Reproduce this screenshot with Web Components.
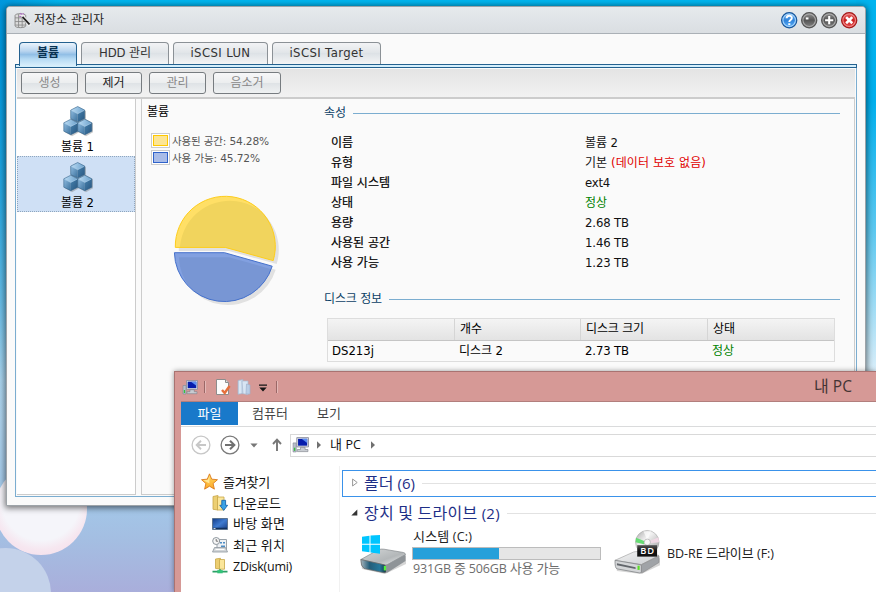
<!DOCTYPE html>
<html lang="ko">
<head>
<meta charset="utf-8">
<title>저장소 관리자</title>
<style>
html,body{margin:0;width:876px;height:592px;overflow:hidden}
</style>
</head>
<body>
<desk-top></desk-top>
<script>
const define = (name, css, html, after) => {
  const t = document.createElement('template');
  t.innerHTML = `<style>*{box-sizing:border-box}:host{display:block;box-sizing:border-box}${css}</style>${html}`;
  customElements.define(name, class extends HTMLElement {
    constructor() { super(); this.attachShadow({mode: 'open'}).append(t.content.cloneNode(true)); }
    connectedCallback() { if (after) after(this, this.shadowRoot); }
  });
};

/* A line of text; Hangul and Latin runs have separate sizes, w is the line's width. */
define('ui-text', `:host{display:inline-block;white-space:pre;line-height:16px;font-size:var(--ko,12px);flex:none}
  .l{font-size:var(--la,11px)}`, `<span id="t"></span>`, (el, r) => {
  const t = r.getElementById('t');
  t.textContent = '';
  const s = el.getAttribute('text');
  for (const run of s.match(/[가-힣]+|[^가-힣]+/g)) {
    const n = document.createElement('span');
    n.className = /[가-힣]/.test(run) ? 'k' : 'l';
    n.textContent = run;
    t.append(n);
  }
  const w = +el.getAttribute('w');
  if (w) {
    const d = (w - t.getBoundingClientRect().width) / s.length;
    t.style.letterSpacing = d.toFixed(3) + 'px';
    el.style.width = w + 'px';
  }
});

const cube = (x, y) => `<g transform="translate(${x} ${y})"><path d="M0 3.6 7 0 14 3.6 7 7.2z" fill="url(#top)"/><path d="M0 3.6 7 7.2V15.5L0 12z" fill="url(#lf)"/><path d="M14 3.6 7 7.2V15.5L14 12z" fill="url(#rt)"/><path d="M.3 3.8 7 7.2l6.7-3.4" stroke="#a9d0ee" stroke-width=".6" fill="none"/><path d="M0 3.6 7 0l7 3.6V12l-7 3.5L0 12z" fill="none" stroke="#336188" stroke-width=".6"/></g>`;
const pc = `<path d="M1 6.5h3V15H1z" fill="#b9bfca" stroke="#828895" stroke-width=".6"/><path d="M1.8 11h1.3v3H1.8z" fill="#35c23e"/><path d="M4.5 1.5h11v8.8h-11z" fill="#dcdfe6" stroke="#85899a" stroke-width=".8"/><path d="M5.7 2.7h8.6v6.4H5.7z" fill="#061cac"/><path d="M9 2.7h5.3v4z" fill="#5a8cf2"/><path d="M8 10.7h4.3v2H15v2H5v-2h3z" fill="#c8ccd2" stroke="#7c8089" stroke-width=".6"/>`;
const icons = {
  cubes: ['0 0 32 32', `<defs><linearGradient id="top" x2="1"><stop stop-color="#bcdcf4"/><stop offset="1" stop-color="#6ba1cc"/></linearGradient><linearGradient id="lf" x2="1" y2="1"><stop stop-color="#8fbbdf"/><stop offset="1" stop-color="#3a709c"/></linearGradient><linearGradient id="rt" x2="1" y2="1"><stop stop-color="#4680ad"/><stop offset="1" stop-color="#28567f"/></linearGradient></defs><g fill="#777" opacity=".4" transform="translate(1 1.2)"><path d="M9 4 16 .5 23 4v8L30 16v9l-7 4-7-4-7 4-7-4v-9l7-4z"/></g>${cube(8.7,.5)}${cube(1.8,13.2)}${cube(15.8,13.2)}`],
  store: ['0 0 16 16', `<path d="M1 3.3C1 1 11 1 11 3.3V13C11 15.3 1 15.3 1 13z" fill="#dcdcdc" stroke="#888" stroke-width=".9"/><path d="M1 5.5h10M1 9h10M1 12.3h10M4.3 2v12.5M7.7 2v12.5" stroke="#888" stroke-width=".8"/><path d="m7 2 8 11" stroke="#eee" stroke-width="3"/><path d="m8 4.5 6.6 7.2" stroke="#222" stroke-width="1.7"/><path d="m5.8 1 1.4 1.4M8.5 1v1.5M5 4.2h1.8" stroke="#ae68c4" stroke-width="1"/>`],
  help: ['0 0 16 16', `<circle cx="8" cy="8" r="7.4" fill="url(#b)" stroke="#1b5799" stroke-width="1.2"/><circle cx="8" cy="8" r="6.1" fill="none" stroke="#a7d4fb"/><path d="M5.5 6.2C5.5 2.8 10.6 2.8 10.6 5.9 10.6 8 8.1 7.7 8.1 9.7" fill="none" stroke="#fff" stroke-width="1.9"/><path d="M7.1 11h2v1.8h-2z" fill="#fff"/><defs><linearGradient id="b" y2="1" x2="0"><stop stop-color="#7ab8f2"/><stop offset=".5" stop-color="#2f83da"/><stop offset="1" stop-color="#5cb0fa"/></linearGradient></defs>`],
  min: ['0 0 16 16', `<circle cx="8" cy="8" r="7.4" fill="url(#g)" stroke="#555" stroke-width="1.2"/><circle cx="8" cy="8" r="6.1" fill="none" stroke="#aaa"/><path d="M4.7 5.3h2.6v2H4.7z" fill="#fff"/><defs><linearGradient id="g" y2="1" x2="0"><stop stop-color="#999"/><stop offset=".5" stop-color="#555"/><stop offset="1" stop-color="#888"/></linearGradient></defs>`],
  max: ['0 0 16 16', `<circle cx="8" cy="8" r="7.4" fill="url(#g)" stroke="#555" stroke-width="1.2"/><circle cx="8" cy="8" r="6.1" fill="none" stroke="#aaa"/><path d="M8 4v8M4 8h8" stroke="#fff" stroke-width="2"/><defs><linearGradient id="g" y2="1" x2="0"><stop stop-color="#999"/><stop offset=".5" stop-color="#505050"/><stop offset="1" stop-color="#888"/></linearGradient></defs>`],
  close: ['0 0 16 16', `<circle cx="8" cy="8" r="7.4" fill="url(#r)" stroke="#a31a1a" stroke-width="1.2"/><circle cx="8" cy="8" r="6.1" fill="none" stroke="#f08a8a"/><path d="m5 5 6 6M11 5l-6 6" stroke="#fff" stroke-width="2.5"/><defs><linearGradient id="r" y2="1" x2="0"><stop stop-color="#e86b6b"/><stop offset=".5" stop-color="#c82020"/><stop offset="1" stop-color="#e65050"/></linearGradient></defs>`],
  pc: ['0 0 16 16', pc],
  check: ['0 0 16 16', `<path d="M1.5.5h9l3 3v12h-12z" fill="#fcfcfc" stroke="#8d8d8d"/><path d="M10.5.5v3h3" fill="#ddd" stroke="#8d8d8d"/><path d="m7 11 2.7 3L14.6 7" stroke="#e5703c" stroke-width="2.5" fill="none"/>`],
  folder: ['0 0 16 16', `<path d="M2 1.5 7 .5v14l-5 .8z" fill="#c6d7ea" stroke="#a5b5cb" stroke-width=".7"/><path d="M6 2h6v13.5l-5-.8z" fill="#d8e5f4" stroke="#abbad0" stroke-width=".7"/><path d="M10.5 5 14 6v9h-4z" fill="#b9cde6" stroke="#a0b2cc" stroke-width=".7"/><path d="M4 1.8v12.5" stroke="#eef5fc"/>`],
  star: ['0 0 16 16', `<path d="m8 .8 2.1 5 5.4.5-4.1 3.6 1.2 5.3L8 12.4l-4.6 2.8 1.2-5.3L.5 6.3l5.4-.5z" fill="url(#s)" stroke="#d97516" stroke-linejoin="round" stroke-width=".8"/><path d="m8 2.8-.1 7-5.5-2.9 4-.4z" fill="#fff3b4" opacity=".75"/><defs><linearGradient id="s" y2="1" x2="0"><stop stop-color="#ffd95e"/><stop offset="1" stop-color="#fca92a"/></linearGradient></defs>`],
  down: ['0 0 16 16', `<path d="M1 1.5 6 .5V15l-5-.7z" fill="#eccf73" stroke="#c9a648" stroke-width=".8"/><path d="M5.5 2H12v13H5.5z" fill="#fbe69a" stroke="#c9a648" stroke-width=".8"/><path d="M9.8 5.3h3.8v5h2L11.7 15.4 7.8 10.3h2z" fill="#39a2e6" stroke="#1766ae" stroke-width=".9"/>`],
  desk: ['0 0 16 16', `<path d="M.5 2.5h15v11H.5z" fill="url(#d)" stroke="#5d748f"/><path d="M1 11.7h14V13H1z" fill="#11305c"/><path d="M1.5 12h2v.8h-2z" fill="#fff"/><defs><linearGradient id="d" x2="1" y2="1"><stop stop-color="#123a86"/><stop offset=".5" stop-color="#3f7bd0"/><stop offset="1" stop-color="#173c83"/></linearGradient></defs>`],
  recent: ['0 0 16 16', `<path d="M5 2.5h9.5v10H5z" fill="#eef1f4" stroke="#9aa2a9"/><path d="M8 5h2v1.5H8zM11 5h2v1.5h-2zM9 8.5h4V10H9z" fill="#4c8cc4"/><circle cx="4.2" cy="4" r="3.5" fill="#f6f6f6" stroke="#8e979e"/><path d="M4.2 2v2.2h2" stroke="#555" stroke-width=".8" fill="none"/><path d="M2.5 10.5h11l2 4.5h-15z" fill="#d1d5d8" stroke="#8e979e" stroke-width=".8"/><path d="M3.5 12.5h9" stroke="#fff"/>`],
  net: ['0 0 16 16', `<path d="m3.5 1 5-.7v10.9l-5-.8z" fill="#ecce70" stroke="#c8a748" stroke-width=".8"/><path d="M7.5 1.5h5v9.7h-5z" fill="#fbe69a" stroke="#c8a748" stroke-width=".8"/><path d="M8 11.2v2.3M.5 13.6h15" stroke="#2aa065" stroke-width="1.7"/><path d="M5.3 12.1h5.4v3.2H5.3z" fill="#32c278"/>`],
  hdd: ['0 0 46 40', `<path d="m1 29 21-12 24 4v8L25 39 2 34z" fill="#777" opacity=".3"/><path d="M.8 24.5 18 15q3-1.4 6-.8l19.5 3.3q2 .6 2 2L28 29.3q-2 .9-4 .5z" fill="url(#m)" stroke="#85898c" stroke-width=".7"/><path d="M.8 24.5 24 29.8q2 .4 2 2V37q-.3 1-2 .7L4 33.5Q.6 31 .8 24.5z" fill="url(#f)" stroke="#666" stroke-width=".7"/><path d="M26 30.2 45.5 19.5v6.5L27.5 37.5l-1.5.2z" fill="#8f9498"/><path d="M23.8 31h2.3v4.4h-2.3z" fill="#52f33d"/><path d="M2 1.7 9.5.7v8H2zM10.5.5 20 0v8.7h-9.5zM2 9.7h7.5v7.5L2 16.3zM10.5 9.7H20v9l-9.5-1.3z" fill="#00c5ff"/><defs><linearGradient id="m" x2="1" y2="1"><stop stop-color="#d4d7d8"/><stop offset=".6" stop-color="#b3b7b9"/><stop offset="1" stop-color="#f2f3f4"/></linearGradient><linearGradient id="f" x2="1"><stop stop-color="#a8b4bb"/><stop offset=".35" stop-color="#235d79"/><stop offset=".75" stop-color="#25789b"/><stop offset="1" stop-color="#183943"/></linearGradient></defs>`],
  bd: ['0 0 48 46', `<path d="m2 37 20-11 25 3v7L28 45 3 42z" fill="#777" opacity=".3"/><path d="m1 31 19-8.5q2-.6 4-.4L46 26 28 35.3z" fill="url(#m)" stroke="#999" stroke-width=".6"/><path d="m1 31 26 4.5q1 .4 1 1.5v6q-.3 1-2 .9L3 39.7Q.8 39 1 31z" fill="#d4d6d8" stroke="#75787b" stroke-width=".7"/><path d="m28 35.5 18-9v6.7L29 43.7h-1z" fill="#a0a3a7" stroke="#888" stroke-width=".6"/><path d="m3 34 19 4v1.8L3 36z" fill="#63676c"/><path d="M24 36.5h2.2v4.3H24z" fill="#5cdf26"/><circle cx="34" cy="12.5" r="12" fill="url(#c)" stroke="#a5a5a5" stroke-width=".6"/><path d="m22.5 8 9 3.5-1 3-8.5-2z" fill="#66dc73"/><path d="m35.5 11.5 10-4 .5 5-10 1z" fill="#f0d8e4"/><path d="m30 1.3 4 9 4-9z" fill="#fff" opacity=".7"/><circle cx="34" cy="12.5" r="3.2" fill="#f7f7f7" stroke="#aaa" stroke-width=".7"/><path d="M23.7 15.5H44v11.7H23.7z" fill="url(#k)"/><text x="33.9" y="24.4" text-anchor="middle" font-family="Open Sans" font-size="9.5" font-weight="600" textLength="14" fill="#fff">BD</text><defs><linearGradient id="m" x2="1" y2="1"><stop stop-color="#f3f3f3"/><stop offset="1" stop-color="#cbced1"/></linearGradient><linearGradient id="c" x2="1" y2="1"><stop stop-color="#a7a7a7"/><stop offset=".4" stop-color="#f2f2f2"/><stop offset="1" stop-color="#999"/></linearGradient><linearGradient id="k" y2="1" x2="0"><stop stop-color="#555"/><stop offset=".5" stop-color="#111"/></linearGradient></defs>`],
  back: ['0 0 20 20', `<circle cx="10" cy="10" r="8.9" fill="#fff" stroke="#c7c7c7" stroke-width="1.3"/><path d="M15 10H6M10 5.8 5.7 10l4.3 4.2" fill="none" stroke="#c7c7c7" stroke-width="1.9"/>`],
  fwd: ['0 0 20 20', `<circle cx="10" cy="10" r="8.9" fill="#fff" stroke="#7a7a7a" stroke-width="1.3"/><path d="M5 10h9M10 5.8l4.3 4.2-4.3 4.2" fill="none" stroke="#707070" stroke-width="2.1"/>`],
  up: ['0 0 10 14', `<path d="M5 13V2M1 6l4-4.3L9 6" fill="none" stroke="#777" stroke-width="1.9"/>`],
  dd: ['0 0 8 5', `<path d="M.4.4h7.2L4 4.4z" fill="#777"/>`],
  qat: ['0 0 8 8', `<path d="M0 .5h8v1.3H0z M.3 3.5h7.4L4 7.5z" fill="#151515"/>`],
  crumb: ['0 0 4 8', `<path d="M0 .3 4 4 0 7.7z" fill="#707070"/>`],
  closed: ['0 0 6 9', `<path d="M.6 1v7l4.6-3.5z" fill="#fff" stroke="#999"/>`],
  open: ['0 0 7 7', `<path d="M6.3.5v6H.3z" fill="#333"/>`]
};
define('ui-icon', `:host{flex:none}svg{display:block;width:100%;height:100%;overflow:visible}`, `<svg></svg>`, (el, r) => {
  const [vb, body] = icons[el.getAttribute('name')];
  const s = r.querySelector('svg');
  s.setAttribute('viewBox', vb); s.innerHTML = body;
  el.style.width = el.getAttribute('w') + 'px';
  el.style.height = (el.getAttribute('h') || el.getAttribute('w')) + 'px';
});

define('tab-item', `:host{display:flex;justify-content:center;height:22px;padding-top:2px;border:1px solid #8b9196;border-bottom:0;border-radius:4px 4px 0 0;background:linear-gradient(#f2f3f5,#e2e6e9 45%,#dde2e6 50%,#f4f5f6);color:#333}
  :host([on]){height:24px;margin-bottom:-2px;z-index:1;position:relative;border-color:#24618f;font-weight:bold;color:#0a3353;background:linear-gradient(#eaf3fc,#b9d5ef 35%,#92bfe6 50%,#b7dbf4 70%,#d9effb)}`, `<slot></slot>`);
define('tool-button', `:host{display:flex;justify-content:center;height:22px;padding-top:2px;border:1px solid #777c80;border-radius:3px;background:linear-gradient(#f7f7f8,#eceeef 48%,#dfe3e6 52%,#eff1f2);color:#222}:host([off]){color:#888}`, `<slot></slot>`);
define('volume-item', `:host{height:56px;display:flex;flex-direction:column;align-items:center;padding:5px 0 0 3px;border:1px solid transparent;color:#000}
  :host([on]){background:#cfe0f5;border:1px dotted #8fa6be}::slotted(ui-text){margin-top:1px}`, `<ui-icon name="cubes" w="32"></ui-icon><slot></slot>`);
define('legend-row', `:host{display:flex;align-items:center;height:17px;gap:2px;color:#555}
  i{width:19px;height:15px;border:1px solid #ccc;padding:1px;background:#fff}b{display:block;height:11px;border:1px solid #ffc800;background:#fce595}:host([blue]) b{border-color:#2f62ca;background:#a9bce8}`, `<i><b></b></i><slot></slot>`);
define('pie-chart', `svg{display:block}`, `<svg width="120" height="120" viewBox="165 188 120 120">
  <defs><path id="y" d="M225.3 246.4H175.3A50 50 0 1 1 273.2 259.6z"/><path id="u" d="M224.5 251.7H174.4A50 50 0 0 0 272.2 265.2z"/><clipPath id="cy"><use href="#y"/></clipPath><clipPath id="cu"><use href="#u"/></clipPath></defs>
  <g fill="#e1e1e1"><use href="#y" x="3.5" y="3.5"/><use href="#u" x="3.5" y="3.5"/></g>
  <use href="#y" fill="#ffdf66"/><g clip-path="url(#cy)"><use href="#y" x="4.5" y="4.5" fill="#f1d45d"/></g><use href="#y" fill="none" stroke="#fdcd1d"/>
  <use href="#u" fill="#82a0e0"/><g clip-path="url(#cu)"><use href="#u" x="4.5" y="4.5" fill="#7896d4"/></g><use href="#u" fill="none" stroke="#4571cc"/></svg>`);
define('section-head', `:host{display:flex;align-items:center;gap:7px;height:16px;color:#0b3f66}i{flex:1;height:1px;background:#7badd0}`, `<slot></slot><i></i>`);
define('prop-row', `:host{display:grid;grid-template-columns:254px auto;height:20px;align-items:center;color:#111}::slotted(:first-child){-webkit-text-stroke:.2px #000;color:#000}`, `<slot></slot>`);
define('disk-table', `:host{border:1px solid #ddd;background:#fafafa;height:44px;color:#000}
  div{display:grid;grid-template-columns:127px 126px 127px 1fr}
  .h{height:22px;background:linear-gradient(#f4f4f4,#e3e3e3);border-bottom:1px solid #c5c5c5}
  span{display:flex;align-items:flex-start}
  .h span{border-right:1px solid #d5d5d5;padding:2px 0 0 5px}.h span:last-child{border:0}.b span{padding:2px 0 0 4px}.ok{color:#008200}`,
  `<div class="h"><span></span><span><ui-text text="개수" w="22"></ui-text></span><span><ui-text text="디스크 크기" w="58"></ui-text></span><span><ui-text text="상태" w="22"></ui-text></span></div>
  <div class="b"><span><ui-text text="DS213j" w="42"></ui-text></span><span><ui-text text="디스크 2" w="44"></ui-text></span><span><ui-text text="2.73 TB" w="44"></ui-text></span><span class="ok"><ui-text text="정상" w="22"></ui-text></span></div>`);

define('storage-window', `:host{background:#fafafa;border:1px solid #9da3a8;border-radius:4px 4px 0 0;box-shadow:0 1px 6px 1px rgba(0,0,0,.55);--ko:12px;--la:11.7px;font-family:"DejaVu Sans","Noto Sans CJK KR",sans-serif}
  header{height:27px;display:flex;align-items:center;background:linear-gradient(#e6eaed,#dadee2);border-bottom:1px solid #aab0b6;border-radius:3px 3px 0 0;padding:0 8px 0 7px;color:#222}
  header .t{margin-left:3px}.ctl{display:flex;gap:3.6px;margin-left:auto}
  nav{display:flex;align-items:flex-start;gap:4px;padding:8px 12px 0;height:30px}
  .strip{margin:0 8px;height:4px;border:1px solid #24618f;background:#d4effc}
  .frame{margin:0 8px;border:1px solid #7badd0;border-top:0;height:429px;padding:1px;display:flex;flex-direction:column}
  .bar{display:flex;gap:7px;padding:3px 4px 0;height:30px;background:linear-gradient(#e4e4e4,#f2f2f2);border-bottom:2px solid #ccc;flex:none}
  .cols{flex:1;display:flex;gap:5px}.list{width:119px;background:#fff;border:1px solid #ccc;border-top:0;border-left:0;padding-top:1px}
  .pane{flex:1;display:grid;grid-template-columns:176px 1fr;border:1px solid #ccc;border-top:0;padding:0 14px 0 6px}
  .chart{padding-top:5px;color:#000}.chart>.name{display:block;margin-left:-1px}.lg{padding:12px 0 0 3px}.lg+pie-chart{margin:23px 0 0 17px}
  .info{padding-top:6px}.rows{padding:12px 0 0 7px}.rows>prop-row>span{display:flex}.rows+section-head{margin-top:18px}disk-table{margin:11px 5px 0 3px}.ok{color:#008200}.bad{color:#e00000}`,
  `<header><ui-icon name="store" w="17"></ui-icon><ui-text class="t" text="저장소 관리자" w="70"></ui-text><span class="ctl"><ui-icon name="help" w="16.4"></ui-icon><ui-icon name="min" w="16.4"></ui-icon><ui-icon name="max" w="16.4"></ui-icon><ui-icon name="close" w="16.4"></ui-icon></span></header>
  <nav><tab-item on style="width:58px"><ui-text text="볼륨" w="22"></ui-text></tab-item><tab-item style="width:88px"><ui-text text="HDD 관리" w="52"></ui-text></tab-item><tab-item style="width:95px"><ui-text text="iSCSI LUN" w="60"></ui-text></tab-item><tab-item style="width:109px"><ui-text text="iSCSI Target" w="74"></ui-text></tab-item></nav>
  <div class="strip"></div>
  <div class="frame"><div class="bar"><tool-button off style="width:57px"><ui-text text="생성" w="22"></ui-text></tool-button><tool-button style="width:57px"><ui-text text="제거" w="22"></ui-text></tool-button><tool-button off style="width:57px"><ui-text text="관리" w="22"></ui-text></tool-button><tool-button off style="width:68px"><ui-text text="음소거" w="33"></ui-text></tool-button></div>
  <div class="cols"><div class="list"><volume-item><ui-text text="볼륨 1" w="33"></ui-text></volume-item><volume-item on><ui-text text="볼륨 2" w="33"></ui-text></volume-item></div>
  <div class="pane"><div class="chart"><ui-text class="name" text="볼륨" w="22"></ui-text>
    <div class="lg"><legend-row style="--ko:10.5px;--la:10.6px"><ui-text text="사용된 공간: 54.28%" w="97"></ui-text></legend-row><legend-row blue style="--ko:10.5px;--la:10.6px"><ui-text text="사용 가능: 45.72%" w="88"></ui-text></legend-row></div><pie-chart></pie-chart></div>
  <div class="info"><section-head><ui-text text="속성" w="22"></ui-text></section-head>
    <div class="rows">
    <prop-row><ui-text text="이름" w="22"></ui-text><ui-text text="볼륨 2" w="33"></ui-text></prop-row>
    <prop-row><ui-text text="유형" w="22"></ui-text><span><ui-text text="기본 " w="26"></ui-text><ui-text class="bad" text="(데이터 보호 없음)" w="95"></ui-text></span></prop-row>
    <prop-row><ui-text text="파일 시스템" w="59"></ui-text><ui-text text="ext4" w="25"></ui-text></prop-row>
    <prop-row><ui-text text="상태" w="22"></ui-text><ui-text class="ok" text="정상" w="22"></ui-text></prop-row>
    <prop-row><ui-text text="용량" w="22"></ui-text><ui-text text="2.68 TB" w="44"></ui-text></prop-row>
    <prop-row><ui-text text="사용된 공간" w="59"></ui-text><ui-text text="1.46 TB" w="44"></ui-text></prop-row>
    <prop-row><ui-text text="사용 가능" w="48"></ui-text><ui-text text="1.23 TB" w="44"></ui-text></prop-row></div>
    <section-head><ui-text text="디스크 정보" w="58"></ui-text></section-head><disk-table></disk-table></div></div></div></div>`);

define('nav-row', `:host{display:flex;align-items:center;height:21.2px;gap:5px;padding-left:31px;color:#111}:host([root]){padding-left:20px}`, `<slot></slot>`);
define('group-head', `:host{display:flex;align-items:center;height:27px;border:1px solid transparent;border-right:0;color:#1e2f87;--ko:16px;--la:15px;padding:0 0 2px 9px;gap:6px}:host([sel]){border-color:#3a92ea}i{flex:1;height:1px;background:#e2e2e2;margin:1px 0 0 1px}`, `<slot></slot><i></i>`);
define('explorer-window', `:host{background:#d69996;border:1px solid #a97371;border-width:1px 0 0 1px;box-shadow:0 0 5px rgba(0,0,0,.4);overflow:hidden;--ko:13px;--la:12.5px;font-family:"Open Sans","Noto Sans CJK KR",sans-serif;padding-left:6px}
  header{height:29px;display:flex;align-items:center;padding:0 24px 0 1px}header i{width:1px;height:12px;background:#9b6867;box-shadow:1px 0 #e5b9b7}
  .in{background:#fff;border:1px solid #b27f7d;border-width:1px 0 0;height:192px}
  .tabs{display:flex;height:25px;border-bottom:1px solid #dadbdc;align-items:flex-start;color:#444}
  .file{width:57px;height:23px;background:#1979ca;color:#fff;display:flex;justify-content:center;padding-top:3px}
  .tabs>ui-text{margin-top:3px}
  .addr{display:flex;align-items:center;height:36px;padding-left:10px}.box{flex:1;height:23px;border:1px solid #d9d9d9;border-right:0;display:flex;align-items:center;padding:0 0 1px 1px;color:#111}
  .main{display:grid;grid-template-columns:159px 1fr;height:129px;padding-top:3px}.side{padding-top:5px;border-right:1px solid #f1f1f1}
  .files{padding:4px 0 0 2px}.drives{display:flex;color:#222}.c{width:189px;display:flex;flex-direction:column;align-items:flex-start}.meter{width:100%;height:13px;border:1px solid #bcbcbc;background:#e6e6e6}.meter b{display:block;height:11px;width:86px;background:#26a0da}`,
  `<header><ui-icon name="pc" w="16"></ui-icon><i style="margin:0 10px 0 6px"></i><ui-icon name="check" w="16"></ui-icon><ui-icon name="folder" w="16" style="margin-left:5px"></ui-icon><ui-icon name="qat" w="8" style="margin-left:7px;margin-top:3px"></ui-icon><i style="margin-left:9px"></i><ui-text text="내 PC" w="38" style="--ko:16px;--la:15.5px;color:#443434;margin:-2px 0 0 auto"></ui-text></header>
  <div class="in"><div class="tabs"><span class="file"><ui-text text="파일" w="24"></ui-text></span><ui-text text="컴퓨터" w="36" style="margin-left:14px"></ui-text><ui-text text="보기" w="24" style="margin-left:29px"></ui-text></div>
  <div class="addr"><ui-icon name="back" w="20"></ui-icon><ui-icon name="fwd" w="20" style="margin-left:9px"></ui-icon><ui-icon name="dd" w="8" h="5" style="margin-left:10px"></ui-icon><ui-icon name="up" w="10" h="14" style="margin-left:14px"></ui-icon><span class="box" style="margin-left:8px"><ui-icon name="pc" w="17"></ui-icon><ui-icon name="crumb" w="4" h="8" style="margin-left:8px"></ui-icon><ui-text text="내 PC" w="31" style="margin-left:9px"></ui-text><ui-icon name="crumb" w="4" h="8" style="margin-left:10px"></ui-icon></span></div>
  <div class="main"><div class="side"><nav-row root><ui-icon name="star" w="17"></ui-icon><ui-text text="즐겨찾기" w="47"></ui-text></nav-row><nav-row><ui-icon name="down" w="16"></ui-icon><ui-text text="다운로드" w="48"></ui-text></nav-row><nav-row><ui-icon name="desk" w="16"></ui-icon><ui-text text="바탕 화면" w="52"></ui-text></nav-row><nav-row><ui-icon name="recent" w="16"></ui-icon><ui-text text="최근 위치" w="52"></ui-text></nav-row><nav-row><ui-icon name="net" w="16"></ui-icon><ui-text text="ZDisk(umi)" w="59"></ui-text></nav-row></div>
  <div class="files"><group-head sel><ui-icon name="closed" w="6" h="9"></ui-icon><ui-text text="폴더 (6)" w="51"></ui-text></group-head><group-head style="margin-top:3px;padding-left:8px"><ui-icon name="open" w="7"></ui-icon><ui-text text="장치 및 드라이브 (2)" w="136"></ui-text></group-head>
  <div class="drives"><ui-icon name="hdd" w="46" h="40" style="margin:8px 0 0 18px"></ui-icon><div class="c" style="margin:1px 0 0 6px"><ui-text text="시스템 (C:)" w="59" style="margin:0 0 2px 1px"></ui-text><div class="meter"><b></b></div><ui-text text="931GB 중 506GB 사용 가능" w="147" style="color:#6d6d6d;margin-left:1px"></ui-text></div><ui-icon name="bd" w="47" h="45" style="margin:3px 0 0 13px"></ui-icon><ui-text text="BD-RE 드라이브 (F:)" w="107" style="margin:18px 0 0 6px"></ui-text></div></div></div></div>`);

define('desk-top', `:host{position:relative;width:876px;height:592px;overflow:hidden;background:radial-gradient(ellipse 60px 420px at 0 0,rgba(0,125,205,.55),rgba(0,150,220,0)),linear-gradient(#00b7f1 0,#00aeeb 60px,#35b7e7 190px,#79c7ea 300px,#b3d9f0 380px,#a3c8e9 500px,#a4bee2 540px,#a9aedb 592px)}
  .r{position:absolute;right:0;top:0;width:20px;height:380px;background:linear-gradient(#00b4ef,#00b0ee 100px,#5cc8f0 230px,#dceffa 375px)}
  .o{position:absolute;border-radius:50%}.o1{left:-5px;top:463px;width:92px;height:92px;background:radial-gradient(circle at 50% 42%,#f5f5fa 55%,#f6e7f0 68%,#f5d5e5)}.o2{left:-40px;top:548px;width:91px;height:91px;background:#c4d2ea}
  storage-window{position:absolute;left:6px;top:6px;width:860px;height:500px}explorer-window{position:absolute;left:174px;top:371px;width:702px;height:221px}`,
  `<div class="r"></div><div class="o o1"></div><div class="o o2"></div><storage-window></storage-window><explorer-window></explorer-window>`);
</script>
</body>
</html>
